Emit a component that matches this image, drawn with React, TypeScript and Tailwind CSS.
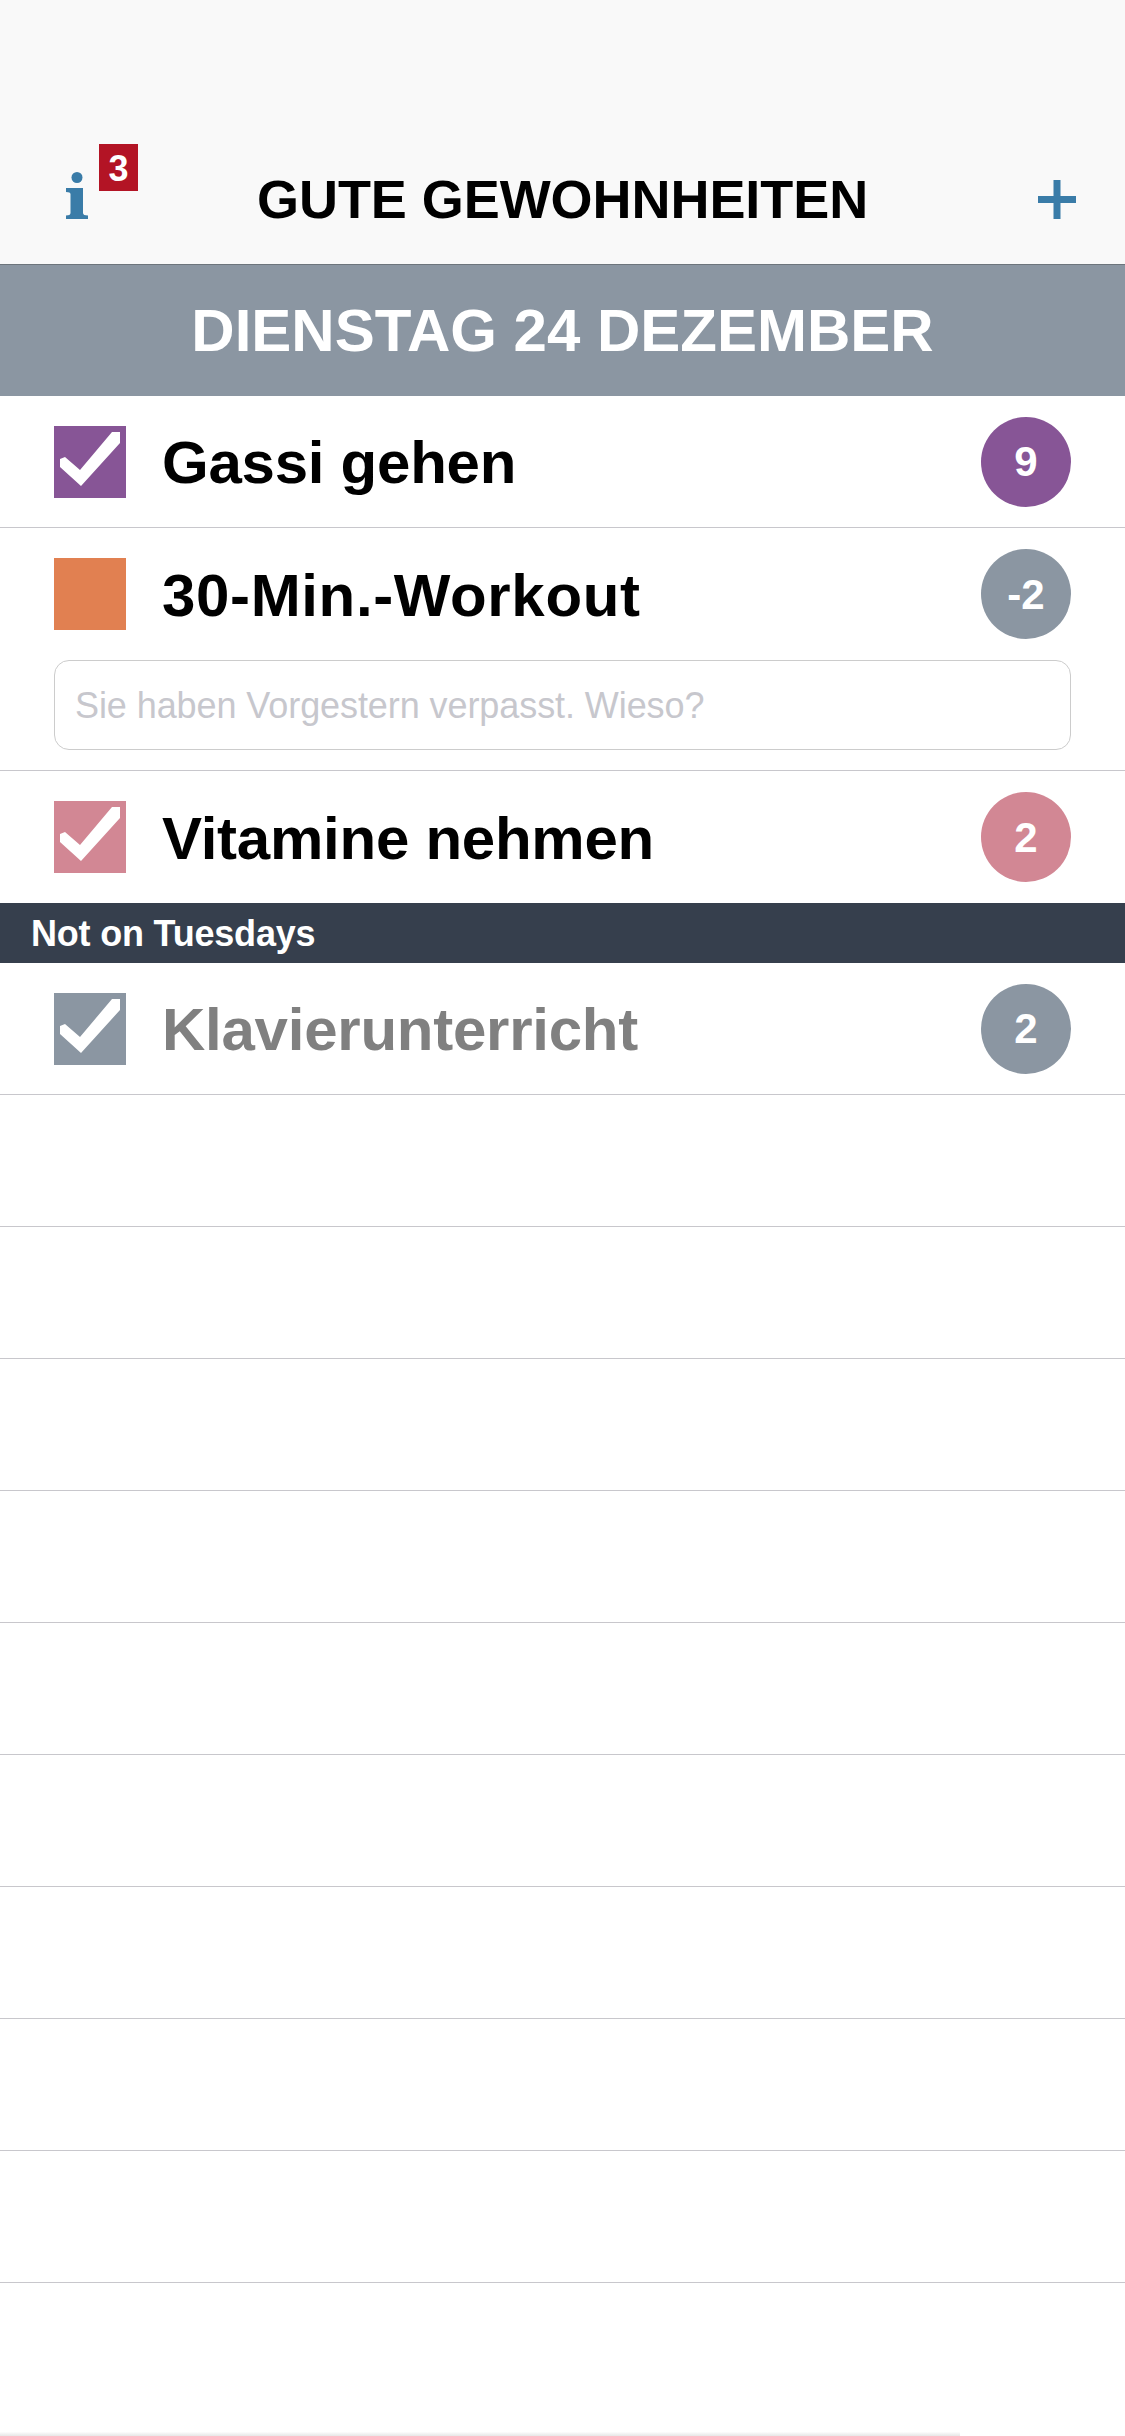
import React from 'react'

interface HabitRowProps {
    title: string
    streak: string
    color: string
    ringColor: string
    checked?: boolean
    muted?: boolean
    noBorder?: boolean
    wide?: boolean
}

const CheckBox = ({ color, checked }: { color: string; checked?: boolean }) => (
    <div className={`w-[72px] h-[72px] shrink-0 ${color}`}>
        {checked && (
            <svg viewBox="0 0 72 72" className="w-full h-full">
                <path d="M6 33 L11 31 L26 44 L58 6 L66 6 L66 17 L27 60 L6 41 Z" fill="#fff" />
            </svg>
        )}
    </div>
)

const HabitRow = ({ title, streak, color, ringColor, checked, muted, noBorder, wide }: HabitRowProps) => (
    <div className={`h-[132px] shrink-0 flex items-center pl-[54px] pr-[54px] ${noBorder ? '' : 'border-b border-[#c8c7cc]'}`}>
        <CheckBox color={color} checked={checked} />
        <span
            className={`ml-[36px] pt-[3px] flex-1 text-[60px] font-bold leading-none ${wide ? 'tracking-[0.65px]' : 'tracking-[-0.25px]'} ${muted ? 'text-[#808080]' : 'text-black'}`}
        >
            {title}
        </span>
        <div className={`w-[90px] h-[90px] rounded-full flex items-center justify-center text-white text-[42px] font-bold ${ringColor}`}>
            {streak}
        </div>
    </div>
)

const emptyRows = [1, 2, 3, 4, 5, 6, 7, 8, 9]

const App = () => {
    return (
        <div className="w-[1125px] h-[2436px] flex flex-col bg-white overflow-hidden font-['Liberation_Sans',Arial,sans-serif]">
            {/* Header */}
            <div className="h-[265px] shrink-0 bg-[#f9f9f9] border-b border-[#6d757c] pt-[134px] pl-[66px] pr-[49px]">
                <div className="h-[130px] grid grid-cols-[191px_auto_1fr] items-center">
                    <div className="relative w-[22px] h-[47px] -mt-[7px]">
                        <svg viewBox="0 0 22 47" className="w-[22px] h-[47px]">
                            <circle cx="11" cy="5.5" r="5.5" fill="#3a7ca8" />
                            <path d="M0 16 L17 16 L17 41 Q17 43.500 22 43.500 L22 47 L0 47 L0 43.500 Q4.500 43.500 4.500 41 L4.500 22 Q4.500 20 0 20 Z" fill="#3a7ca8" />
                        </svg>
                        <div className="absolute left-[33px] -top-[28px] w-[39px] h-[47px] pt-[3px] bg-[#b31425] text-white text-[36px] font-bold flex items-center justify-center">
                            3
                        </div>
                    </div>
                    <h1 className="text-[54px] font-bold text-black leading-none tracking-[-0.05px]">GUTE GEWOHNHEITEN</h1>
                    <svg viewBox="0 0 38 39" className="w-[38px] h-[39px] justify-self-end">
                        <path d="M15.500 0 H22.500 V16 H38 V23 H22.500 V39 H15.500 V23 H0 V16 H15.500 Z" fill="#3a7ca8" />
                    </svg>
                </div>
            </div>

            {/* Date */}
            <div className="h-[131px] shrink-0 bg-[#8b96a2] flex items-center justify-center pt-[1px] text-white text-[60px] font-bold">
                DIENSTAG 24 DEZEMBER
            </div>

            <HabitRow title="Gassi gehen" streak="9" color="bg-[#875596]" ringColor="bg-[#875596]" checked />

            {/* Row with reason input */}
            <div className="shrink-0 h-[243px] border-b border-[#c8c7cc]">
                <HabitRow title="30-Min.-Workout" streak="-2" color="bg-[#e18051]" ringColor="bg-[#8b96a2]" noBorder wide />
                <div className="px-[54px]">
                    <input
                        type="text"
                        placeholder="Sie haben Vorgestern verpasst. Wieso?"
                        className="w-full h-[90px] px-[20px] pt-[2px] border border-[#cccccc] rounded-[15px] text-[36px] tracking-[-0.08px] outline-none placeholder:text-[#c7c7cd]"
                    />
                </div>
            </div>

            <HabitRow title="Vitamine nehmen" streak="2" color="bg-[#d28794]" ringColor="bg-[#d28794]" checked noBorder />

            <div className="h-[60px] shrink-0 bg-[#363f4d] flex items-center pl-[31px] pt-[2px] text-white text-[36px] font-bold tracking-[-0.2px]">
                Not on Tuesdays
            </div>

            <HabitRow title="Klavierunterricht" streak="2" color="bg-[#8b96a2]" ringColor="bg-[#8b96a2]" checked muted />

            {emptyRows.map((row) => (
                <div key={row} className="h-[132px] shrink-0 border-b border-[#c8c7cc]" />
            ))}

            {/* Bottom edge shade */}
            <div className="mt-auto w-[960px] h-[4px] bg-gradient-to-b from-[#fdfdfd] to-[#e6e6e6]" />
        </div>
    )
}

export default App
